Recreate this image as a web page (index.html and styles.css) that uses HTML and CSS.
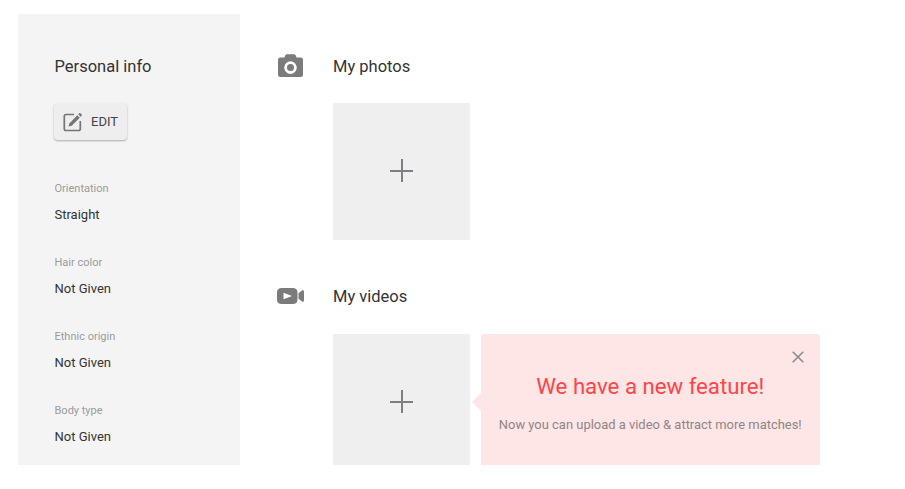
FILE: index.html
```html
<!DOCTYPE html>
<html lang="en">
<head>
<meta charset="utf-8">
<title>Profile</title>
<link rel="stylesheet" href="styles.css">
</head>
<body>
<div class="page">
  <aside class="sidebar">
    <h2 class="side-title">Personal info</h2>
    <button class="edit-btn" type="button">
      <svg class="edit-icon" viewBox="0 0 20 20" width="20" height="20" aria-hidden="true">
        <path d="M11 2.500H3A1.700 1.700 0 0 0 1.300 4.200v12.600A1.700 1.700 0 0 0 3 18.500h12.600a1.700 1.700 0 0 0 1.700-1.700V9" fill="none" stroke="#757575" stroke-width="1.700"/>
        <path d="M5.500 14.600l.8-3.200 8-8.200 2.500 2.500-8.100 8.100zM15.200 2.300l1-1a1 1 0 0 1 1.300 0l1.200 1.200a1 1 0 0 1 0 1.300l-1 1z" fill="#757575"/>
      </svg>
      <span>EDIT</span>
    </button>
    <dl class="facts">
      <div class="fact"><dt>Orientation</dt><dd>Straight</dd></div>
      <div class="fact"><dt>Hair color</dt><dd>Not Given</dd></div>
      <div class="fact"><dt>Ethnic origin</dt><dd>Not Given</dd></div>
      <div class="fact"><dt>Body type</dt><dd>Not Given</dd></div>
    </dl>
  </aside>
  <main class="content">
    <section class="media photos">
      <div class="media-head">
        <svg class="media-icon" viewBox="0 0 25 23" width="25" height="23" aria-hidden="true">
          <path fill="#7b7b7b" fill-rule="evenodd" d="M7 2C7.400.8 8.200.2 9.400.2h6.200c1.200 0 2 .6 2.400 1.800l.5 1.500H22.500A2.500 2.500 0 0 1 25 6v14.500a2.500 2.500 0 0 1-2.500 2.500h-20A2.500 2.500 0 0 1 0 20.500V6a2.500 2.500 0 0 1 2.500-2.500h4zM12.500 7.300a6.300 6.300 0 1 0 0 12.600 6.300 6.300 0 0 0 0-12.600zm0 2.800a3.500 3.500 0 1 1 0 7 3.500 3.500 0 0 1 0-7z"/>
        </svg>
        <h3 class="media-title">My photos</h3>
      </div>
      <div class="media-row">
        <button class="tile" type="button" aria-label="Add photo"><span class="plus"></span></button>
      </div>
    </section>
    <section class="media videos">
      <div class="media-head">
        <svg class="media-icon" viewBox="0 0 27 16" width="27" height="16" aria-hidden="true">
          <path fill="#7b7b7b" fill-rule="evenodd" d="M5 0h10.500c3.500 0 5 1.500 5 4.500v7c0 3-1.500 4.500-5 4.500H5c-3.500 0-5-1.500-5-4.500v-7C0 1.500 1.500 0 5 0zM6.500 4.700v6.600L15 8z"/>
          <path fill="#7b7b7b" d="M21.500 5.200 25 2.600c.9-.6 2-.1 2 1v8.800c0 1.100-1.100 1.600-2 1l-3.500-2.600z"/>
        </svg>
        <h3 class="media-title">My videos</h3>
      </div>
      <div class="media-row">
        <button class="tile" type="button" aria-label="Add video"><span class="plus"></span></button>
        <div class="promo">
          <button class="promo-close" type="button" aria-label="Close">
            <svg viewBox="0 0 12 12" width="12" height="12" aria-hidden="true"><path d="M.7.7l10.600 10.600M11.300.7.7 11.300" stroke="#8f8a8a" stroke-width="1.600" fill="none"/></svg>
          </button>
          <h4 class="promo-title">We have a new feature!</h4>
          <p class="promo-text">Now you can upload a video &amp; attract more matches!</p>
        </div>
      </div>
    </section>
  </main>
</div>
</body>
</html>
```

FILE: styles.css
```css
* { box-sizing: border-box; }
html, body { margin: 0; padding: 0; background: #fff; }
body { font-family: Roboto, "Liberation Sans", sans-serif; color: #333; overflow: hidden; height: 489px; padding-top: 14px; }

.page {
  display: flex;
  height: 451px;
  margin-left: 18px;
  overflow: hidden;
  align-items: flex-start;
}

.sidebar {
  width: 222px;
  height: 451px;
  flex: none;
  background: #f4f4f4;
  padding: 42px 0 0 36.500px;
}
.side-title {
  margin: 0;
  font-size: 16.500px;
  line-height: 22px;
  font-weight: 400;
  color: #333;
}
.edit-btn {
  display: flex;
  align-items: center;
  gap: 8px;
  width: 73px;
  height: 37px;
  margin: 25px 0 0 -0.5px;
  padding: 0 0 0 9px;
  border: 0;
  border-radius: 4px;
  background: #eee;
  box-shadow: 0 1px 2px rgba(0,0,0,.3);
  font: 400 13px Roboto, sans-serif;
  color: #444;
}
.edit-icon { flex: none; }
.facts { margin: 42px 0 0; }
.fact { height: 74px; }
.fact dt { font-size: 11px; line-height: 14px; color: #9b9b9b; }
.fact dd { margin: 10px 0 0; font-size: 13px; line-height: 18px; color: #333; }

.content { flex: 1; padding-left: 37px; min-width: 0; }
.media-head { display: flex; align-items: center; height: 22px; }
.media-icon { flex: none; }
.media-title {
  margin: 0;
  font-size: 16.500px;
  line-height: 22px;
  font-weight: 400;
  color: #333;
}
.photos { padding-top: 42px; }
.photos .media-icon { margin: 0 30px 3px 1px; }
.videos { padding-top: 46px; }
.videos .media-icon { margin: 0 29px 2px 0; }
.media-row { display: flex; margin-left: 56px; }
.photos .media-row { margin-top: 25px; }
.videos .media-row { margin-top: 26px; }

.tile {
  position: relative;
  width: 136.500px;
  height: 137px;
  flex: none;
  border: 0;
  padding: 0;
  background: #efefef;
}
.plus { position: absolute; left: 57px; top: 56px; width: 23px; height: 23px; }
.plus::before, .plus::after { content: ""; position: absolute; background: #7c8084; }
.plus::before { left: 0; right: 0; top: 10.500px; height: 2px; }
.plus::after { top: 0; bottom: 0; left: 10.500px; width: 2px; }

.promo {
  position: relative;
  width: 339.500px;
  height: 137px;
  margin-left: 11px;
  flex: none;
  background: #fee6e6;
  border-radius: 3px;
  text-align: center;
  padding-top: 39px;
}
.promo::before {
  content: "";
  position: absolute;
  left: -9px;
  top: 59px;
  border-style: solid;
  border-width: 9px 9px 9px 0;
  border-color: transparent #fee6e6 transparent transparent;
}
.promo-close {
  position: absolute;
  top: 17px;
  right: 15.500px;
  width: 13px;
  height: 13px;
  padding: 0;
  border: 0;
  background: none;
  display: flex;
}
.promo-title {
  margin: 0;
  font-size: 22.200px;
  line-height: 27px;
  font-weight: 400;
  color: #ff4447;
}
.promo-text {
  margin: 16px 0 0;
  font-size: 12.950px;
  line-height: 18px;
  color: #8e8585;
}
```
